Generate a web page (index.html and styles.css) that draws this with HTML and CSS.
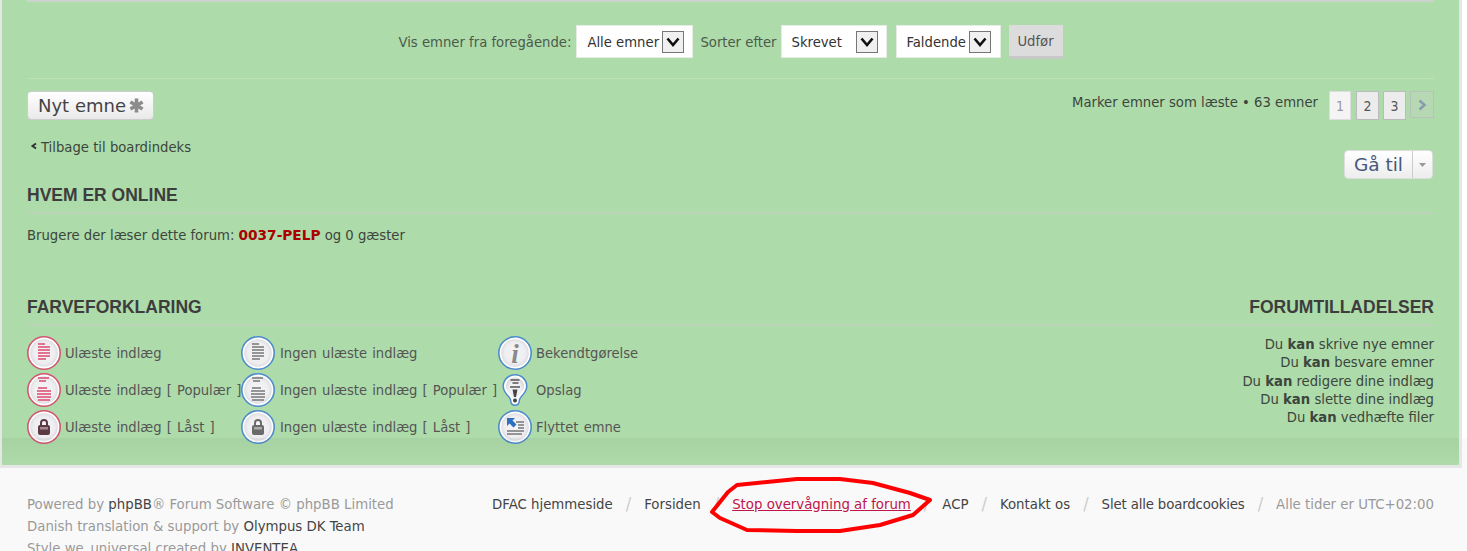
FILE: index.html
```html
<!DOCTYPE html>
<html lang="da">
<head>
<meta charset="utf-8">
<title>Forum</title>
<link rel="stylesheet" href="styles.css">
</head>
<body>
<svg class="defs" width="0" height="0"><defs><radialGradient id="disc"><stop offset="0" stop-color="#f6f6f8"/><stop offset=".7" stop-color="#eeeef1"/><stop offset="1" stop-color="#d8d8dd"/></radialGradient></defs></svg>
<div class="wrap">
  <div class="topline"></div>
  <form class="sortbar">
    <span>Vis emner fra foregående:</span>
    <div class="sel sel-a"><span class="sel-text">Alle emner</span><span class="sel-arrow"><svg width="14" height="10" viewBox="0 0 14 10"><path d="M1.500 1.500 7 8 12.500 1.500" fill="none" stroke="#111" stroke-width="2.600"/></svg></span></div>
    <span>Sorter efter</span>
    <div class="sel sel-b"><span class="sel-text">Skrevet</span><span class="sel-arrow"><svg width="14" height="10" viewBox="0 0 14 10"><path d="M1.500 1.500 7 8 12.500 1.500" fill="none" stroke="#111" stroke-width="2.600"/></svg></span></div>
    <div class="sel sel-c"><span class="sel-text">Faldende</span><span class="sel-arrow"><svg width="14" height="10" viewBox="0 0 14 10"><path d="M1.500 1.500 7 8 12.500 1.500" fill="none" stroke="#111" stroke-width="2.600"/></svg></span></div>
    <div class="go-btn">Udfør</div>
  </form>
  <div class="rule"></div>
  <div class="actions">
    <div class="new-btn">Nyt emne<svg class="star" width="15" height="15" viewBox="0 0 15 15"><path d="M7.500 .5v14M1.400 4l12.200 7M13.600 4 1.400 11" stroke="#8c8c8c" stroke-width="3.600" fill="none"/></svg></div>
    <div class="actions-right">
      <span class="stats">Marker emner som læste • 63 emner</span>
      <div class="pages">
        <span class="page page-on">1</span>
        <span class="page">2</span>
        <span class="page">3</span>
        <span class="page page-next"><svg width="10" height="12" viewBox="0 0 10 12"><path d="M2.500 1.500 7.500 6 2.500 10.500" fill="none" stroke="#8a9bb0" stroke-width="2.600"/></svg></span>
      </div>
    </div>
  </div>
  <div class="back-row">
    <div class="back"><svg width="8" height="8" viewBox="0 0 8 8"><path d="M6 1.500 2.500 4 6 6.500" fill="none" stroke="#333" stroke-width="2"/></svg>Tilbage til boardindeks</div>
    <div class="jump"><span class="jump-label">Gå til</span><span class="jump-caret"><svg width="7" height="4" viewBox="0 0 7 4"><path d="M0 0h7L3.500 4z" fill="#999"/></svg></span></div>
  </div>
  <section class="online">
    <h3 class="heading">HVEM ER ONLINE</h3>
    <p class="online-text">Brugere der læser dette forum: <a class="admin">0037-PELP</a> og 0 gæster</p>
  </section>
  <div class="bottom">
    <section class="legend-box">
      <h3 class="heading">FARVEFORKLARING</h3>
      <div class="legend">
        <div class="item"><svg class="ico" viewBox="0 0 34 34"><circle cx="17" cy="17" r="15" fill="url(#disc)" stroke="#fff" stroke-width="2.400"/><circle cx="17" cy="17" r="16.200" fill="none" stroke="#d2566f" stroke-width="1.600"/><path d="M11 8h7M11 11h12M11 14h12M11 17h12M11 20h12M11 23h8" stroke="#dc4a70" stroke-width="1.500"/></svg>Ulæste indlæg</div>
        <div class="item"><svg class="ico" viewBox="0 0 34 34"><circle cx="17" cy="17" r="15" fill="url(#disc)" stroke="#fff" stroke-width="2.400"/><circle cx="17" cy="17" r="16.200" fill="none" stroke="#4f8ccb" stroke-width="1.600"/><path d="M11 8h7M11 11h12M11 14h12M11 17h12M11 20h12M11 23h8" stroke="#777" stroke-width="1.500"/></svg>Ingen ulæste indlæg</div>
        <div class="item"><svg class="ico" viewBox="0 0 34 34"><circle cx="17" cy="17" r="15" fill="url(#disc)" stroke="#fff" stroke-width="2.400"/><circle cx="17" cy="17" r="16.200" fill="none" stroke="#4f8ccb" stroke-width="1.600"/><text x="17" y="27" font-family="Liberation Serif" font-size="27" font-weight="700" font-style="italic" text-anchor="middle" fill="#8a8a8a">i</text></svg>Bekendtgørelse</div>

        <div class="item"><svg class="ico" viewBox="0 0 34 34"><circle cx="17" cy="17" r="15" fill="url(#disc)" stroke="#fff" stroke-width="2.400"/><circle cx="17" cy="17" r="16.200" fill="none" stroke="#d2566f" stroke-width="1.600"/><path d="M11 5h11M12 8h7M11 15h9M10 18h14M10 21h14M10 24h14M11 27h12" stroke="#dc4a70" stroke-width="1.400"/></svg>Ulæste indlæg [ Populær ]</div>
        <div class="item"><svg class="ico" viewBox="0 0 34 34"><circle cx="17" cy="17" r="15" fill="url(#disc)" stroke="#fff" stroke-width="2.400"/><circle cx="17" cy="17" r="16.200" fill="none" stroke="#4f8ccb" stroke-width="1.600"/><path d="M11 5h11M12 8h7M11 15h9M10 18h14M10 21h14M10 24h14M11 27h12" stroke="#777" stroke-width="1.400"/></svg>Ingen ulæste indlæg [ Populær ]</div>
        <div class="item"><svg class="ico" viewBox="0 0 34 34"><path d="M17 1C10 1 4.500 6.500 4.500 13c0 5 3.500 8.500 6 11.500 1 1.500 1.500 2.500 1.500 3.500 0 3 2.300 5 5 5s5-2 5-5c0-1 .5-2 1.500-3.500 2.500-3 6-6.500 6-11.500C29.500 6.500 24 1 17 1z" fill="#4f8ccb"/><path d="M17 2.500C11 2.500 6 7.500 6 13c0 4.500 3 7.500 5.500 10.500 1.500 2 2 3 2 4.500 0 2 1.500 3.500 3.500 3.500s3.500-1.500 3.500-3.500c0-1.500.5-2.500 2-4.500C25 20.500 28 17.500 28 13c0-5.500-5-10.500-11-10.500z" fill="#fff"/><path d="M17 4.500C12 4.500 8 8.500 8 13c0 3.500 2.500 6.500 5 9.500 1.500 2 2.500 3.500 2.500 5.500 0 1 .5 1.500 1.500 1.500s1.500-.5 1.500-1.500c0-2 1-3.500 2.500-5.500 2.500-3 5-6 5-9.500 0-4.500-4-8.500-9-8.500z" fill="url(#disc)"/><path d="M12.500 7h9M14.500 10h6M12 14h10" stroke="#555" stroke-width="1.400"/><path d="M14.500 16.500h5l-1.500 7.500h-2z" fill="#444"/><circle cx="17" cy="27.500" r="2" fill="#444"/></svg>Opslag</div>

        <div class="item"><svg class="ico" viewBox="0 0 34 34"><circle cx="17" cy="17" r="15" fill="url(#disc)" stroke="#fff" stroke-width="2.400"/><circle cx="17" cy="17" r="16.200" fill="none" stroke="#d2566f" stroke-width="1.600"/><path d="M14 16v-3a3 3 0 0 1 6 0v3" fill="none" stroke="#5a3b44" stroke-width="2"/><rect x="11" y="15" width="12" height="10" rx="2" fill="#5a3b44"/><rect x="13" y="17" width="8" height="2.500" fill="#a58890"/></svg>Ulæste indlæg [ Låst ]</div>
        <div class="item"><svg class="ico" viewBox="0 0 34 34"><circle cx="17" cy="17" r="15" fill="url(#disc)" stroke="#fff" stroke-width="2.400"/><circle cx="17" cy="17" r="16.200" fill="none" stroke="#4f8ccb" stroke-width="1.600"/><path d="M14 16v-3a3 3 0 0 1 6 0v3" fill="none" stroke="#6a6a6a" stroke-width="2"/><rect x="11" y="15" width="12" height="10" rx="2" fill="#6a6a6a"/><rect x="13" y="17" width="8" height="2.500" fill="#aaa"/></svg>Ingen ulæste indlæg [ Låst ]</div>
        <div class="item"><svg class="ico" viewBox="0 0 34 34"><circle cx="17" cy="17" r="15" fill="url(#disc)" stroke="#fff" stroke-width="2.400"/><circle cx="17" cy="17" r="16.200" fill="none" stroke="#4f8ccb" stroke-width="1.600"/><path d="M18 12h8M20 15h6M20 18h6M9 21h17M9 24h15" stroke="#777" stroke-width="1.300"/><path d="M9 8h8l-2.500 2.500 4 4-3 3-4-4L9 16z" fill="#2f6fc0"/></svg>Flyttet emne</div>
      </div>
    </section>
    <section class="perm-box">
      <h3 class="heading">FORUMTILLADELSER</h3>
      <p class="perm">Du <strong>kan</strong> skrive nye emner<br>Du <strong>kan</strong> besvare emner<br>Du <strong>kan</strong> redigere dine indlæg<br>Du <strong>kan</strong> slette dine indlæg<br>Du <strong>kan</strong> vedhæfte filer</p>
    </section>
  </div>
  <div class="fade"></div>
</div>
<footer class="footer">
  <div class="copy">
    <div>Powered by <a>phpBB</a>® Forum Software © phpBB Limited</div>
    <div>Danish translation &amp; support by <a>Olympus DK Team</a></div>
    <div>Style we_universal created by <a>INVENTEA</a></div>
  </div>
  <nav class="links">
    <a>DFAC hjemmeside</a><i>/</i><a>Forsiden</a><i>/</i><a class="stop">Stop overvågning af forum</a><i>/</i><a>ACP</a><i>/</i><a>Kontakt os</a><i>/</i><a class="cookies">Slet alle boardcookies</a><i>/</i><span>Alle tider er UTC+02:00</span>
  </nav>
</footer>
<svg class="scribble" width="240" height="70" viewBox="700 470 240 70"><path d="M930 500 910 493 873 483 840 479 797 479 767 482 737 485 728 492 712 512 720 518 747 530 797 531 840 531 880 525 913 515Z" fill="none" stroke="#f00" stroke-width="4" stroke-linejoin="round"/></svg>
</body>
</html>
```
FILE: styles.css
```css
html, body {
  margin: 0;
  padding: 0;
  height: 551px;
  overflow: hidden;
}
body {
  position: relative;
  background: linear-gradient(#fff 438px, #f9f9f9 438px);
  color: #444;
  font-family: "DejaVu Sans", sans-serif;
  font-stretch: condensed;
  font-size: 14.7px;
}
.defs { position: absolute; }
.wrap {
  position: relative;
  box-sizing: border-box;
  width: 1462px;
  height: 468px;
  padding: 0 25px;
  border-left: 2px solid #e6e6e6;
  border-right: 3px solid #e6e6e6;
  border-bottom: 3px solid #e6e6e6;
  background: #aedbaa;
}
.topline {
  height: 2px;
  background: #ccd3cc;
}
.sortbar {
  display: flex;
  justify-content: center;
  align-items: center;
  height: 33px;
  margin-top: 23px;
  margin-bottom: 20px;
  color: #4c5a4c;
}
.sel {
  box-sizing: border-box;
  display: flex;
  align-items: center;
  justify-content: space-between;
  height: 33px;
  background: #fff;
  border: 1px solid #e4ece4;
  padding: 0 8px 0 10px;
  color: #333;
}
.sel-a { width: 117px; margin: 0 7px 0 5px; padding-right: 8px; }
.sel-b { width: 106px; margin: 0 9px 0 4px; }
.sel-c { width: 105px; margin-right: 8px; padding-right: 9px; }
.sel-arrow {
  box-sizing: border-box;
  display: flex;
  align-items: center;
  justify-content: center;
  width: 22px;
  height: 22px;
  background: #f0f0f0;
  border: 1px solid #777;
}
.go-btn {
  box-sizing: border-box;
  width: 54px;
  height: 34px;
  line-height: 31px;
  text-align: center;
  background: #dcdcdc;
  border-bottom: 3px solid #c8c8c8;
  color: #555;
}
.rule {
  height: 1px;
  background: #bde2b9;
}
.actions {
  display: flex;
  justify-content: space-between;
  align-items: flex-start;
  margin-top: 12px;
}
.new-btn {
  box-sizing: border-box;
  display: flex;
  align-items: center;
  height: 29px;
  padding: 0 9px 0 10px;
  background: linear-gradient(#fff, #e9e9e9);
  border: 1px solid #ccc;
  border-radius: 4px;
  font-size: 18px;
  font-stretch: normal;
  color: #444;
}
.star { margin-left: 3px; }
.actions-right {
  display: flex;
  align-items: flex-start;
  height: 29px;
  color: #3c463c;
}
.stats { margin-top: 2px; }
.pages {
  display: flex;
  gap: 4px;
  margin-left: 11px;
}
.page {
  box-sizing: border-box;
  display: flex;
  align-items: center;
  justify-content: center;
  width: 23px;
  height: 29px;
  background: #ececec;
  border: 1px solid #bbb;
  font-size: 14px;
  color: #555;
}
.page-on { width: 22px; margin-right: 1px; background: #f4f4f4; border-color: #ddd; color: #999; }
.page-next { width: 24px; height: 27px; background: #b6d9b3; border-color: #b9c2b9; }
.back-row {
  display: flex;
  justify-content: space-between;
  align-items: flex-start;
  height: 48px;
  margin-top: 17px;
}
.back {
  display: flex;
  align-items: center;
  gap: 3px;
  height: 18px;
  padding-left: 3px;
  color: #3c463c;
}
.jump {
  display: flex;
  box-sizing: border-box;
  height: 29px;
  margin-top: 13px;
  margin-right: 1px;
  background: linear-gradient(#fff, #ededed);
  border: 1px solid #ddd;
  border-radius: 4px;
  font-size: 18.5px;
  font-stretch: normal;
  line-height: 27px;
  color: #47597a;
}
.jump-label { padding: 0 9px; border-right: 1px solid #ccc; }
.jump-caret { display: flex; align-items: center; padding: 0 6px; }
.heading {
  margin: 0 0 1px;
  height: 29px;
  box-sizing: border-box;
  border-bottom: 2px solid #bcd3b9;
  font-family: "Liberation Sans", sans-serif;
  font-stretch: normal;
  font-size: 17.5px;
  font-weight: 700;
  line-height: 20px;
  color: #3d3d3d;
}
.online-text {
  box-sizing: border-box;
  margin: 0;
  padding-top: 11px;
  height: 82px;
  line-height: 18px;
  color: #3c463c;
}
.admin {
  font-stretch: normal;
  font-weight: 700;
  font-size: 13.7px;
  color: #a00;
}
.bottom {
  display: flex;
  justify-content: space-between;
}
.legend-box { flex: 1; }
.legend {
  display: grid;
  grid-template-columns: 214px 257px 1fr;
  grid-auto-rows: 37px;
  margin-top: 8px;
  color: #555;
  font-size: 14.6px;
  word-spacing: 1px;
}
.item {
  display: flex;
  align-items: center;
  white-space: nowrap;
}
.ico { width: 34px; height: 34px; margin-right: 4px; flex: none; }
.item:nth-child(3n+2) .ico { margin-right: 5px; }
.perm-box { width: 300px; text-align: right; }
.perm {
  margin: 9px 0 0;
  line-height: 18.25px;
  color: #3c463c;
}
.fade {
  position: absolute;
  left: 0;
  right: 0;
  bottom: 0;
  height: 27px;
  background: linear-gradient(rgba(0, 0, 0, .045), rgba(0, 0, 0, 0));
  pointer-events: none;
}
.footer {
  display: flex;
  justify-content: space-between;
  padding: 25px 33px 0 27px;
  color: #999;
  font-size: 14.8px;
  line-height: 22px;
}
.footer a { color: #444; }
.links { display: flex; }
.links i {
  font-style: normal;
  color: #ccc;
  font-size: 18px;
  margin: 0 13px;
}
.links .cookies { letter-spacing: -.15px; }
.links .stop {
  color: #c0144b;
  text-decoration: underline;
}
.scribble {
  position: absolute;
  left: 700px;
  top: 470px;
}
```
